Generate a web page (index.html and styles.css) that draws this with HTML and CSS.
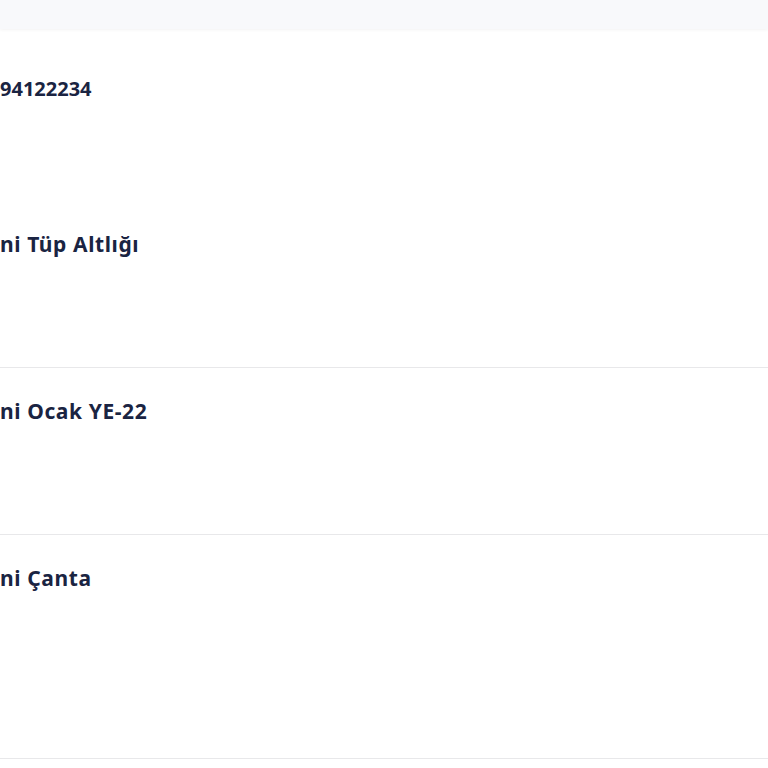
FILE: index.html
```html
<!DOCTYPE html>
<html lang="tr">
<head>
  <meta charset="UTF-8">
  <title>Sipariş Ürünleri</title>
  <link rel="stylesheet" href="styles.css">
</head>
<body>
  <div class="topbar"></div>

  <div class="items">
    <div class="item item-first">
      <p class="code">94122234</p>
      <p class="title title-gap">ni Tüp Altlığı</p>
    </div>
    <div class="item">
      <p class="title">ni Ocak YE-22</p>
    </div>
    <div class="item item-last">
      <p class="title">ni Çanta</p>
    </div>
  </div>
</body>
</html>
```

FILE: styles.css
```css
body {
  margin: 0;
  font-family: "Noto Sans", "Open Sans", sans-serif;
  background: #ffffff;
  color: #1a2442;
}

.topbar {
  height: 29px;
  background: #f8f9fb;
  box-shadow: 0 1px 3px rgba(0,0,0,0.05);
}

.items {
  margin-top: 2px;
}

.item {
  padding: 31px 0 111px;
  border-bottom: 1px solid #e8e8ea;
}

.item-first {
  padding-top: 46px;
}

.item-last {
  padding-bottom: 168px;
}

.item p {
  margin: 0;
  font-weight: 700;
  line-height: 24px;
}

.code {
  font-size: 20px;
}

.title {
  font-size: 21px;
  letter-spacing: 0.6px;
}

.title-gap {
  margin-top: 131px !important;
}
```
